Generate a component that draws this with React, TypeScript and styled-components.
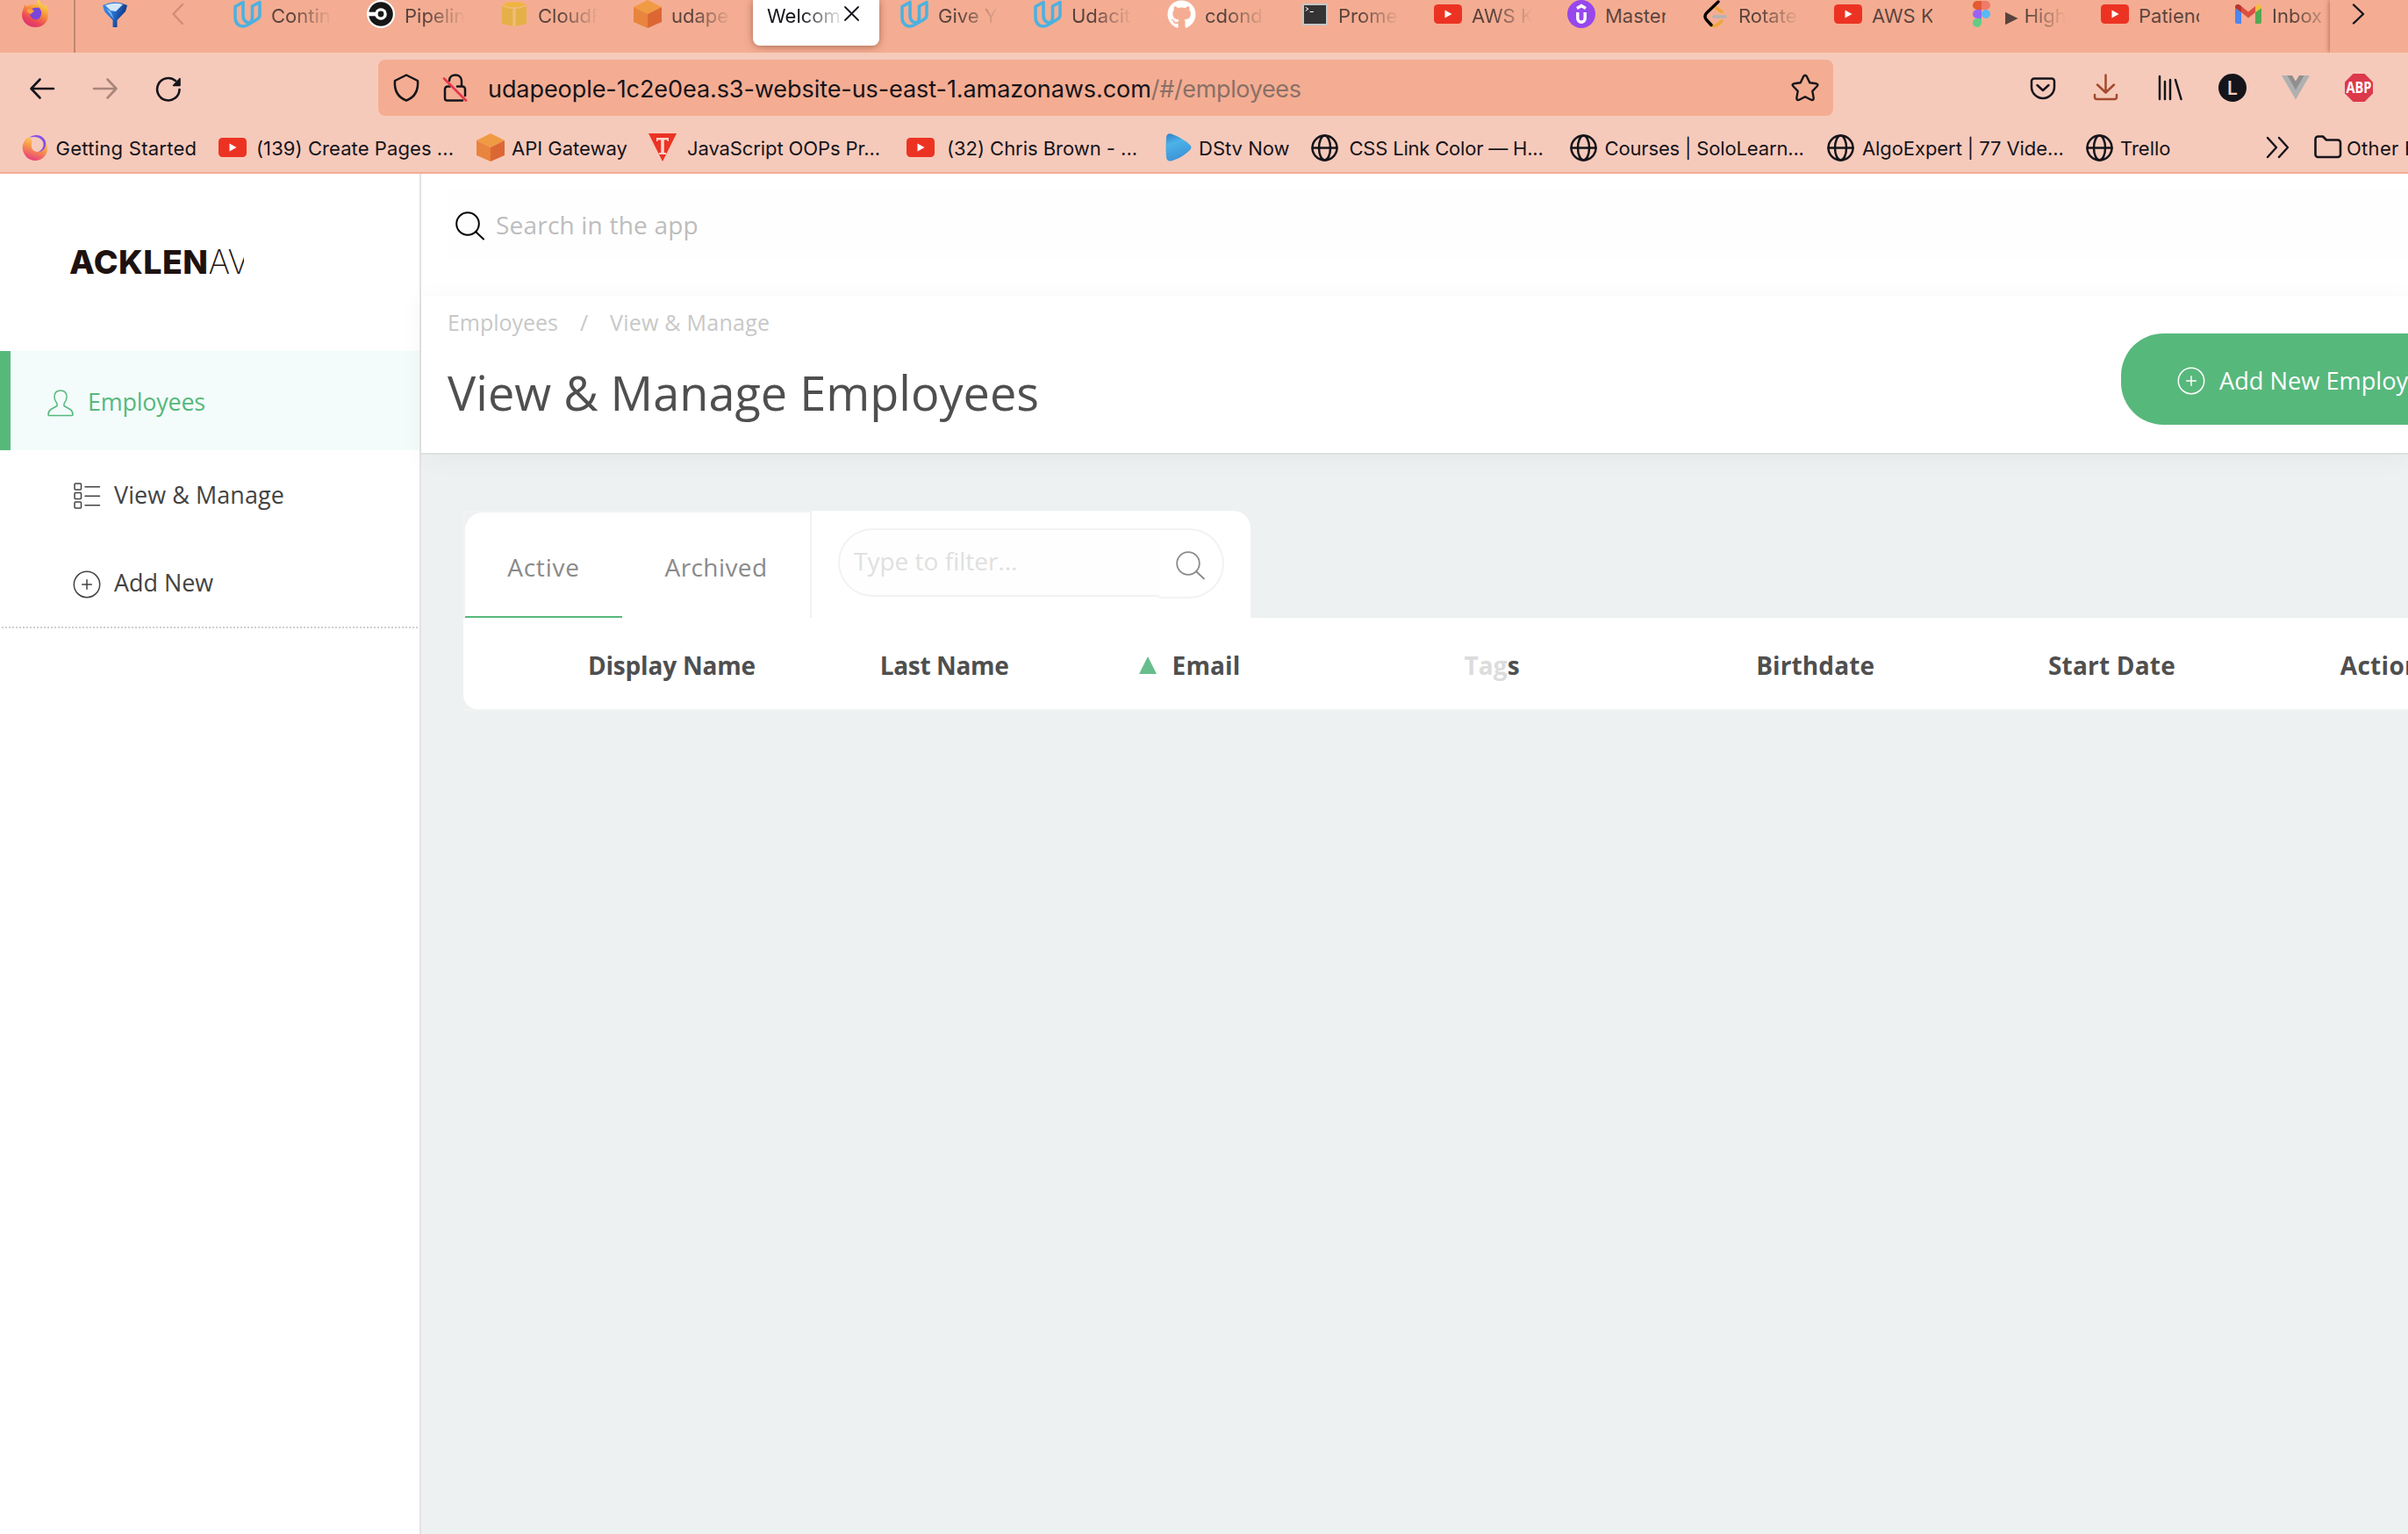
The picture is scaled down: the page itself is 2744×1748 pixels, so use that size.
import React from "react";
import styled, { createGlobalStyle, css } from "styled-components";
import { FaGithub } from "react-icons/fa";

const peach = "#f4ad92";
const blush = "#f6cabb";
const ink = "#15141a";
const green = "#57b87c";
const slate = "#4f4f4f";

const Global = createGlobalStyle`
  * { box-sizing: border-box; }
  html, body { margin: 0; overflow: hidden; background: #fff; }
  svg { display: block; flex: none; }
`;

const Window = styled.div`
  width: 2744px;
  height: 1748px;
  display: flex;
  flex-direction: column;
  overflow: hidden;
  font-family: "Open Sans", "Noto Sans", sans-serif;
`;

/* ---------- browser chrome ---------- */

const Chrome = styled.header`
  flex: none;
  height: 198px;
  border-bottom: 2px solid ${peach};
  background: ${blush};
  color: ${ink};
  font-family: Inter, "Liberation Sans", sans-serif;
`;

const TabStrip = styled.div`
  display: flex;
  height: 60px;
  background: ${peach};
`;

const Pinned = styled.div<{ $w: number; $pad: number; $line?: boolean }>`
  flex: none;
  width: ${(p) => p.$w}px;
  padding-left: ${(p) => p.$pad}px;
  ${(p) => p.$line && css`border-right: 2px solid #bf8773;`}
`;

const Tabs = styled.div`
  flex: 1;
  display: flex;
  overflow: hidden;
`;

const Tab = styled.div<{ $active?: boolean }>`
  flex: none;
  display: flex;
  width: 152px;
  height: 60px;
  padding-left: 20px;
  color: rgba(21, 20, 26, 0.7);
  ${(p) =>
    p.$active &&
    css`
      width: 144px;
      height: 52px;
      margin: 0 4px;
      padding-left: 16px;
      border-radius: 0 0 8px 8px;
      background: #fff;
      color: ${ink};
      box-shadow: 0 1px 8px rgba(90, 40, 20, 0.5);
    `}
`;

const Favicon = styled.div`
  display: flex;
  flex: none;
  align-items: center;
  justify-content: center;
  width: 32px;
  height: 32px;
`;

const TabLabel = styled.div<{ $w: number; $fade: boolean }>`
  width: ${(p) => p.$w}px;
  margin-left: 11px;
  height: 36px;
  line-height: 36px;
  font-size: 22px;
  white-space: nowrap;
  overflow: hidden;
  ${(p) => p.$fade && css`mask-image: linear-gradient(to right, #000 35%, transparent 100%);`}
`;

const ActiveLabel = styled(TabLabel)`
  margin-left: 0;
  mask-image: linear-gradient(to right, #000 45%, transparent 105%);
`;

const CloseBox = styled.div`
  width: 20px;
  margin: 6px 0 0 3px;
`;

const Play = styled.span`
  font-family: "DejaVu Sans", sans-serif;
  font-size: 19px;
  margin-right: 7px;
`;

const ScrollRight = styled.div`
  flex: none;
  width: 89px;
  padding: 4px 0 0 24px;
  box-shadow: -1px 0 5px rgba(120, 60, 40, 0.5);
  clip-path: inset(0 0 0 -8px);
`;

const NavRow = styled.div`
  display: flex;
  align-items: center;
  height: 80px;
  padding-left: 32px;
`;

const NavButtons = styled.div`
  display: flex;
  gap: 40px;
  width: 399px;
`;

const UrlBar = styled.div`
  display: flex;
  align-items: center;
  width: 1658px;
  height: 64px;
  padding: 0 16px;
  border-radius: 8px;
  background: ${peach};
`;

const UrlIcon = styled.div<{ $w: number }>`
  width: ${(p) => p.$w}px;
`;

const Url = styled.div`
  flex: 1;
  padding-top: 4px;
  font-size: 27px;
  line-height: 60px;
  letter-spacing: -0.07px;
  white-space: nowrap;
`;

const UrlPath = styled.span`
  color: #8a7068;
  letter-spacing: -0.35px;
`;

const Extensions = styled.div`
  display: flex;
  gap: 40px;
  margin-left: 223px;
`;

const Bookmarks = styled.div`
  display: flex;
  height: 56px;
  padding-left: 25px;
`;

const Bookmark = styled.div<{ $w: number; $ls: number }>`
  flex: none;
  display: flex;
  align-items: center;
  width: ${(p) => p.$w}px;
  font-size: 22px;
  line-height: 54px;
  letter-spacing: ${(p) => p.$ls}px;
  white-space: nowrap;
`;

const BookmarkIcon = styled.div<{ $w: number }>`
  flex: none;
  width: ${(p) => p.$w}px;
`;

const BookmarkText = styled.span`
  padding-top: 2px;
`;

/* ---------- application ---------- */

const AppShell = styled.div`
  flex: 1;
  display: flex;
  min-height: 0;
`;

const Sidebar = styled.nav`
  flex: none;
  width: 480px;
  border-right: 2px solid #e2e2e2;
  background: #fff;
`;

const LogoArea = styled.div`
  height: 202px;
  padding: 74px 0 0 79px;
`;

const Logo = styled.div`
  width: 199px;
  overflow: hidden;
  white-space: nowrap;
  font-family: Inter, sans-serif;
  font-size: 37.5px;
  line-height: 54px;
  font-weight: 800;
  letter-spacing: 0.5px;
  color: #1d1210;
`;

const LogoThin = styled.span`
  font-weight: 200;
  letter-spacing: 0;
`;

const SideItem = styled.div<{ $h: number; $pad: number; $active?: boolean }>`
  display: flex;
  align-items: center;
  height: ${(p) => p.$h}px;
  padding-left: ${(p) => p.$pad}px;
  font-size: 26.9px;
  line-height: 40px;
  color: #434343;
  ${(p) =>
    p.$active &&
    css`
      padding-top: 2px;
      border-left: 12px solid ${green};
      background: #f3fcfb;
      color: ${green};
    `}
`;

const SideIcon = styled.div<{ $w: number }>`
  width: ${(p) => p.$w}px;
  padding-top: 3px;
`;

const SideLabel = styled.span<{ $ls?: number }>`
  letter-spacing: ${(p) => p.$ls ?? 0}px;
`;

const SideRule = styled.div`
  margin: 0 2px;
  height: 2px;
  background: repeating-linear-gradient(to right, #d0d0d0 0 2px, transparent 2px 4px);
`;

const Main = styled.main`
  flex: 1;
  display: flex;
  flex-direction: column;
  min-width: 0;
`;

const SearchArea = styled.div`
  flex: none;
  height: 139px;
  padding: 19px 0 0 30px;
  background: #fff;
`;

const SearchField = styled.div`
  display: flex;
  align-items: center;
  gap: 12px;
  height: 78px;
  padding-left: 9px;
  background: #fefefe;
  font-size: 28px;
  letter-spacing: 0.2px;
  line-height: 44px;
  color: #bdbdbd;
`;

const SearchIcon = styled.div`
  padding-top: 3px;
`;

const PageHeader = styled.div`
  position: relative;
  flex: none;
  display: flex;
  justify-content: space-between;
  height: 181px;
  padding-left: 30px;
  border-bottom: 2px solid #dfe1e1;
  background: #fff;
  box-shadow: 0 4px 28px rgba(0, 0, 0, 0.045);
`;

const Crumbs = styled.div`
  display: flex;
  padding-top: 12px;
  font-size: 25px;
  line-height: 36px;
  color: #c8c8c8;
`;

const Crumb = styled.span<{ $w?: number; $ls: number }>`
  width: ${(p) => (p.$w ? `${p.$w}px` : "auto")};
  letter-spacing: ${(p) => p.$ls}px;
`;

const Title = styled.h1`
  margin: 26px 0 0;
  font-size: 54px;
  line-height: 72px;
  font-weight: 400;
  letter-spacing: 0.03px;
  color: ${slate};
`;

const AddButton = styled.div`
  flex: none;
  display: flex;
  align-items: center;
  width: 327px;
  height: 104px;
  margin-top: 43px;
  padding: 3px 0 0 64px;
  border-radius: 48px 0 0 48px;
  background: ${green};
  color: #fff;
  font-size: 27.2px;
  line-height: 44px;
  white-space: nowrap;
  overflow: hidden;
`;

const AddLabel = styled.span`
  margin-left: 16px;
`;

const Content = styled.section`
  flex: 1;
  padding: 64px 0 0 48px;
  background: #edf1f2;
`;

const Toolbar = styled.div`
  display: flex;
  height: 122px;
`;

const StatusTabs = styled.div`
  width: 395px;
  border: solid #f2f3f3;
  border-width: 2px 0 0 2px;
`;

const StatusTabsBody = styled.div`
  display: flex;
  height: 120px;
  border-radius: 20px 0 0 0;
  background: #fff;
`;

const StatusTab = styled.div<{ $w: number; $ls: number; $on?: boolean }>`
  width: ${(p) => p.$w}px;
  height: 120px;
  padding-top: 4px;
  border-bottom: 2px solid ${(p) => (p.$on ? green : "transparent")};
  text-align: center;
  font-size: 28px;
  line-height: 116px;
  letter-spacing: ${(p) => p.$ls}px;
  color: #8a8a8a;
`;

const FilterPanel = styled.div`
  display: flex;
  width: 502px;
  padding: 20px 0 0 30px;
  border-left: 2px solid #f1f2f2;
  border-radius: 0 20px 0 0;
  background: #fff;
`;

const FilterInput = styled.div`
  width: 366px;
  height: 78px;
  padding-left: 16px;
  border: solid #f2f2f2;
  border-width: 2px 0 2px 2px;
  border-radius: 40px 0 0 40px;
  background: #fefefe;
  font-size: 28px;
  line-height: 71px;
  color: #e0e0e0;
`;

const FilterButton = styled.div`
  width: 74px;
  height: 80px;
  padding: 24px 0 0 19px;
  border: solid #f2f2f2;
  border-width: 2px 2px 2px 0;
  border-radius: 0 40px 40px 0;
`;

const TableHead = styled.div`
  border-bottom: 2px solid #f2f3f3;
`;

const TableRow = styled.div`
  display: flex;
  height: 104px;
  padding: 4px 0 0 142px;
  border-radius: 0 0 0 16px;
  background: #fff;
  overflow: hidden;
`;

const HeadCell = styled.div<{ $ls: number }>`
  flex: none;
  display: flex;
  align-items: center;
  justify-content: space-between;
  width: 332.8px;
  padding-right: 18px;
  font-size: 28px;
  font-weight: 700;
  letter-spacing: ${(p) => p.$ls}px;
  color: ${slate};
  white-space: nowrap;
`;

const Faded = styled.span`
  color: #dcdcdc;
`;

const SortMark = styled.div`
  width: 0;
  height: 0;
  margin-top: -1px;
  border: solid transparent;
  border-width: 0 10px 20px;
  border-bottom-color: #67be8c;
`;

/* ---------- icons ---------- */

type SvgProps = { w: number; h: number; children: React.ReactNode; sw?: number; color?: string; fill?: boolean };
const Glyph = ({ w, h, children, sw = 2.4, color = ink, fill }: SvgProps) => (
  <svg
    width={w}
    height={h}
    viewBox={`0 0 ${w} ${h}`}
    fill={fill ? color : "none"}
    stroke={fill ? "none" : color}
    strokeWidth={sw}
    strokeLinecap="round"
    strokeLinejoin="round"
  >
    {children}
  </svg>
);

const Udacity = () => (
  <Glyph w={32} h={32} color="#4db1df" sw={3.6}>
    <path d="M11 2.5 L2 7.5 V20 C2 26 6 30 11 30 C13 30 14.5 29.3 16 28.5 L27 22 C29 20.8 30 19 30 17 V2.5 L21.5 7 V20 C21.5 22.5 20.5 24.5 18.5 26.3 M11 2.5 V18 C11 22.5 13.5 25.3 18 26" />
  </Glyph>
);
const Circle = () => (
  <Glyph w={32} h={32} fill>
    <circle cx="16" cy="16" r="16" fill="#fff" />
    <circle cx="16" cy="16" r="13.8" fill="#161616" />
    <circle cx="16" cy="16" r="6.8" fill="#fff" />
    <rect x="1.5" y="13.7" width="9" height="4.6" fill="#fff" />
    <circle cx="16" cy="16" r="3.4" fill="#161616" />
  </Glyph>
);
const YellowBox = () => (
  <Glyph w={28} h={28} fill>
    <path d="M0 5 L12.5 8 V28 L0 25Z M28 5 L15.5 8 V28 L28 25Z" fill="#e5b048" />
    <path d="M12.5 8h3v20h-3z" fill="#eebf74" />
    <path d="M0 3.5 L7 .6 H21 L28 3.5 L20 6.6 H8Z" fill="#f0b540" />
    <path d="M1 4.5 L8 7 H20 L27 4.5" fill="none" stroke="#efc27e" strokeWidth="1" />
  </Glyph>
);
const Cube = () => (
  <Glyph w={32} h={32} fill>
    <path d="M16 0 L32 8 L16 16 L0 8Z" fill="#f09b43" />
    <path d="M0 8 L16 16 V32 L0 25Z" fill="#e8843d" />
    <path d="M32 8 L16 16 V32 L32 25Z" fill="#dc6734" />
  </Glyph>
);
const Terminal = () => (
  <Glyph w={29} h={25} fill>
    <path d="M0 0h29v25H0z" fill="#c5c6c6" />
    <path d="M2 2h25v21H2z" fill="#343434" />
    <path d="M4 4.5l3 1.800-3 1.800M9 9.500h3.500" stroke="#fff" strokeWidth="1" fill="none" />
  </Glyph>
);
const YouTube = () => (
  <Glyph w={32} h={22} fill>
    <rect width="32" height="22" rx="4.5" fill="#ec3323" />
    <path d="M12.500 6.500 L20.500 11 L12.500 15.500Z" fill="#fff" />
  </Glyph>
);
const Udemy = () => (
  <Glyph w={32} h={32} color="#fff" sw={3.4}>
    <circle cx="16" cy="16" r="16" fill="#9747eb" stroke="none" />
    <path d="M11 9.500 L16 6.500 L21 9.500" strokeLinecap="butt" strokeLinejoin="miter" />
    <path d="M11.800 14 V21 a4.200 4.200 0 0 0 8.400 0 V14" strokeLinecap="butt" />
  </Glyph>
);
const Leet = () => (
  <Glyph w={32} h={32} sw={3.4}>
    <path d="M17 8.500 L24 13.500 M12 28.500 C15 30.500 19 29.500 24 24" stroke="#efa53a" />
    <path d="M15 19 H28" stroke="#b3b3b3" />
    <path d="M20 2 L7 14.500 C4.500 17 4.500 20 6.500 22.500 L12 28.500" stroke="#000" />
  </Glyph>
);
const Figma = () => (
  <Glyph w={20} h={30} fill>
    <path d="M5 0 H10 V10 H5 A5 5 0 0 1 5 0Z" fill="#e35b30" />
    <path d="M10 0 H15 A5 5 0 0 1 15 10 H10Z" fill="#ef7a6a" />
    <path d="M5 10 H10 V20 H5 A5 5 0 0 1 5 10Z" fill="#9b63f3" />
    <circle cx="15" cy="15" r="5" fill="#56b9f8" />
    <path d="M5 20 H10 V25 A5 5 0 1 1 5 20Z" fill="#62cc86" />
  </Glyph>
);
const Gmail = () => (
  <Glyph w={30} h={22} fill>
    <path d="M0 4 L7 9 V22 H2 A2 2 0 0 1 0 20Z" fill="#4b86ee" />
    <path d="M30 4 L23 9 V22 H28 A2 2 0 0 0 30 20Z" fill="#54a853" />
    <path d="M7 2 L15 8.500 L23 2 V9 L15 15.500 L7 9Z" fill="#dc4f40" />
    <path d="M0 3 C0 0 3.500-1 6 1 L7 2 V9 L0 4Z" fill="#b9342b" />
    <path d="M30 3 C30 0 26.500-1 24 1 L23 2 V9 L30 4Z" fill="#f2bd42" />
  </Glyph>
);
const FirefoxLogo = () => (
  <svg width="32" height="32" viewBox="0 0 32 32">
    <defs>
      <linearGradient id="ff" x1="0.8" y1="0" x2="0.3" y2="1">
        <stop offset="0" stopColor="#fdea4a" />
        <stop offset="0.4" stopColor="#f79a3a" />
        <stop offset="0.75" stopColor="#ee4a55" />
        <stop offset="1" stopColor="#dc2f7c" />
      </linearGradient>
    </defs>
    <path d="M2 12 C3 8 4 6 5 5 C5.500 6.500 6 7 7 7.500 C8.500 6 10 5.500 11 5.500 C13 5 17 5 18 6 C17 3 19 0 20 -1 C21 3 25 5 26 8 C27 6.500 27.500 6 28 5 C30 8 31 12 31 16 C31 25 25 31 16.500 31 C8 31 1 25 1 17 C1 15 1.500 13 2 12Z" fill="url(#ff)" />
    <path d="M10 15 C11 10 15 8 18 9 C20 7.500 22 10 22 11 C24 13 23.500 19 20 21.500 C15 24 10 20 10 15Z" fill="#7a46d8" />
    <path d="M6 12 C9 9.500 12 10.500 15 12 C14 14 12.500 14.500 11 16 C9 15 7 14 6 12Z" fill="#f9a23b" />
  </svg>
);
const FirefoxSwirl = () => (
  <svg width="30" height="30" viewBox="0 0 30 30">
    <defs>
      <linearGradient id="sw" x1="0.7" y1="0" x2="0.3" y2="1">
        <stop offset="0" stopColor="#fbdc6a" />
        <stop offset="0.45" stopColor="#f7974a" />
        <stop offset="1" stopColor="#e63a80" />
      </linearGradient>
    </defs>
    <path d="M4 6 C1 10 0 14 1 18 C2.500 25 8 30 15 30 C23 30 29 24 29 16 C29 13 28 10 26 8 C27 14 24 19.500 18 20 C13 20 10 16 11 11 C12 8 11 5 9 4 C7 3.500 5 4.500 4 6Z" fill="url(#sw)" />
    <path d="M8 4 C14 -1 23 0 26.500 7 C29 14 25 20 18 20.500 C24.500 17.500 26 11 23 7 C20 3 14 2 8 4Z" fill="#8650e8" />
  </svg>
);
const BlueGem = () => (
  <svg width="34" height="32" viewBox="0 0 34 32">
    <defs>
      <linearGradient id="gem" x1="0" y1="0" x2="1" y2="0.4">
        <stop offset="0" stopColor="#3f8ce4" />
        <stop offset="0.5" stopColor="#2a74d2" />
        <stop offset="1" stopColor="#0c2f7d" />
      </linearGradient>
    </defs>
    <path d="M3 6 Q17 -1 31 6 L29 13 L19.500 23 V31 H14.500 V23 L5 13Z" fill="url(#gem)" />
    <path d="M6 6 Q17 2 26 5 L18 13 L12 12Z" fill="#d4e7fb" />
    <path d="M7 10 L12 13 L16 22Z" fill="#8abcf2" />
  </svg>
);
const Globe = () => (
  <Glyph w={31} h={31} sw={2.500}>
    <circle cx="15.500" cy="15.500" r="14" />
    <ellipse cx="15.500" cy="15.500" rx="6.500" ry="14" />
    <path d="M1.500 15.500 H29.500" />
  </Glyph>
);
const PointT = () => (
  <Glyph w={32} h={32} fill>
    <path d="M0 0 H32 L16 32Z" fill="#ec3323" />
    <path d="M9 5 H23 V9 H21.500 V7.500 H17.800 V22 H20 V24 H12 V22 H14.200 V7.500 H10.500 V9 H9Z" fill="#f8d5cc" />
  </Glyph>
);
const Dstv = () => (
  <svg width="30" height="32" viewBox="0 0 30 32">
    <defs>
      <linearGradient id="ds" x1="0" y1="0" x2="0.3" y2="1">
        <stop offset="0" stopColor="#2f7fc4" />
        <stop offset="0.4" stopColor="#4db2e8" />
        <stop offset="1" stopColor="#3c93d6" />
      </linearGradient>
    </defs>
    <path d="M1 5 C1 1 4 -1 8 1 C16 4 24 9 28 13 C30 15 30 17 28 19 C23 24 15 29 8 31 C4 32.500 1.500 31 1 27 C.4 20 .4 12 1 5Z" fill="url(#ds)" />
  </svg>
);

const tabs: { label: React.ReactNode; icon?: React.ReactNode; fade?: boolean; active?: boolean }[] = [
  { label: "Contin", icon: <Udacity /> },
  { label: "Pipelin", icon: <Circle /> },
  { label: "CloudF", icon: <YellowBox /> },
  { label: "udape", icon: <Cube /> },
  { label: "Welcom", active: true },
  { label: "Give Y", icon: <Udacity /> },
  { label: "Udacit", icon: <Udacity /> },
  { label: "cdond", icon: <FaGithub size={33} color="#fff" /> },
  { label: "Prome", icon: <Terminal /> },
  { label: "AWS K", icon: <YouTube /> },
  { label: "Master", icon: <Udemy />, fade: false },
  { label: "Rotate", icon: <Leet /> },
  { label: "AWS K", icon: <YouTube />, fade: false },
  { label: <><Play>▶</Play>High</>, icon: <Figma /> },
  { label: "Patienc", icon: <YouTube />, fade: false },
  { label: "Inbox", icon: <Gmail /> },
];

const bookmarks = [
  { w: 224, off: 38.5, ls: 0.27, text: "Getting Started", icon: <FirefoxSwirl /> },
  { w: 294, off: 43, ls: 0.08, text: "(139) Create Pages ...", icon: <YouTube /> },
  { w: 196, off: 40, ls: 0, text: "API Gateway", icon: <Cube /> },
  { w: 294, off: 44, ls: -0.1, text: "JavaScript OOPs Pr...", icon: <PointT /> },
  { w: 295, off: 46, ls: -0.03, text: "(32) Chris Brown - ...", icon: <YouTube /> },
  { w: 166, off: 38, ls: 0, text: "DStv Now", icon: <Dstv /> },
  { w: 295, off: 43.5, ls: -0.2, text: "CSS Link Color — H...", icon: <Globe /> },
  { w: 293, off: 39.5, ls: -0.15, text: "Courses | SoloLearn...", icon: <Globe /> },
  { w: 295, off: 40, ls: -0.08, text: "AlgoExpert | 77 Vide...", icon: <Globe /> },
  { w: 205, off: 39, ls: 0, text: "Trello", icon: <Globe /> },
  {
    w: 55, off: 30, ls: 0, text: "",
    icon: <Glyph w={28} h={26} sw={2.400}><path d="M2 2 L12 13 L2 24 M15 2 L25 13 L15 24" /></Glyph>,
  },
  {
    w: 120, off: 37, ls: 0.3, text: "Other Bookmarks",
    icon: <Glyph w={32} h={28} sw={2.600}><path d="M1.500 4.500 A3 3 0 0 1 4.500 1.500 H10 L14 5.500 H27 A3 3 0 0 1 30 8.500 V22 A3 3 0 0 1 27 25 H4.500 A3 3 0 0 1 1.500 22Z" /></Glyph>,
  },
];

const Plus = ({ color }: { color: string }) => (
  <Glyph w={32} h={32} sw={1.5} color={color}>
    <circle cx="16" cy="16" r="14.700" />
    <path d="M16 10.700 V21.300 M10.700 16 H21.300" />
  </Glyph>
);
const Magnifier = ({ color, sw }: { color: string; sw: number }) => (
  <Glyph w={34} h={34} sw={sw} color={color}>
    <circle cx="14" cy="14" r="12.800" />
    <path d="M23 23 L32 31.500" />
  </Glyph>
);

export default function App() {
  return (
    <Window>
      <Global />
      <Chrome>
        <TabStrip>
          <Pinned $w={86} $pad={24} $line><FirefoxLogo /></Pinned>
          <Pinned $w={90} $pad={28}><BlueGem /></Pinned>
          <Pinned $w={70} $pad={18}>
            <Glyph w={18} h={32} color="#d08e76"><path d="M14 5 L3.500 16 L14 27" /></Glyph>
          </Pinned>
          <Tabs>
            {tabs.map((t, i) =>
              t.active ? (
                <Tab key={i} $active>
                  <ActiveLabel $w={84} $fade={false}>{t.label}</ActiveLabel>
                  <CloseBox>
                    <Glyph w={20} h={20} sw={1.8}><path d="M2 2 L17 17 M17 2 L2 17" /></Glyph>
                  </CloseBox>
                </Tab>
              ) : (
                <Tab key={i}>
                  <Favicon>{t.icon}</Favicon>
                  <TabLabel $w={69} $fade={t.fade !== false}>{t.label}</TabLabel>
                </Tab>
              )
            )}
          </Tabs>
          <ScrollRight>
            <Glyph w={18} h={24} sw={2.4}><path d="M3 1.500 L14 12 L3 22.500" /></Glyph>
          </ScrollRight>
        </TabStrip>
        <NavRow>
          <NavButtons>
            <Glyph w={32} h={32} sw={2.6}><path d="M29 17 H4 M13.500 6.500 L3.500 17 L13.500 27.500" /></Glyph>
            <Glyph w={32} h={32} sw={2.6} color="#a8857a"><path d="M3 17 H28 M18.500 6.500 L28.500 17 L18.500 27.500" /></Glyph>
            <Glyph w={32} h={32} sw={2.6}>
              <path d="M28.500 18 A12.700 12.700 0 1 1 24 8" />
              <path d="M29 5.500 V13.500 H21.500Z" fill={ink} strokeWidth={1.500} />
            </Glyph>
          </NavButtons>
          <UrlBar>
            <UrlIcon $w={54}>
              <Glyph w={32} h={32} sw={2.5}><path d="M16 1.500 L29 8 C30 20 25 27 16 30.500 C7 27 2 20 3 8Z" /></Glyph>
            </UrlIcon>
            <UrlIcon $w={55}>
              <Glyph w={32} h={32} sw={2.5}>
                <path d="M11 8 C11 4 14 1.500 18 1.500 C22 1.500 25 4 25 8.500 V14.500 H20 M12 14.500 H9 A3 3 0 0 0 6 17.500 V28 A2.500 2.500 0 0 0 8.500 30.500 H26 M29 25 V17.500 A3 3 0 0 0 26 14.500" />
                <path d="M5 5.500 L30 30.500" stroke="#e8374e" strokeWidth={2.800} />
              </Glyph>
            </UrlIcon>
            <Url>
              udapeople-1c2e0ea.s3-website-us-east-1.amazonaws.com<UrlPath>/#/employees</UrlPath>
            </Url>
            <Glyph w={32} h={32} sw={2.4}>
              <path d="M14.200 3 Q16 .5 17.800 3 L21.300 10.300 L28.800 11.300 Q31.500 12 29.600 14.300 L24.300 19.900 L25.700 27.600 Q25.700 31 22.800 29.700 L16 26.200 L9.200 29.700 Q6.300 31 6.300 27.600 L7.700 19.900 L2.400 14.300 Q.5 12 3.200 11.300 L10.700 10.300Z" />
            </Glyph>
          </UrlBar>
          <Extensions>
            <Glyph w={32} h={32} sw={2.500}>
              <path d="M6 5.500 H26 A3 3 0 0 1 29 8.500 V15 A13 13 0 0 1 3 15 V8.500 A3 3 0 0 1 6 5.500Z M9.500 13 L16 19 L22.500 13" />
            </Glyph>
            <Glyph w={32} h={32} sw={2.500} color="#a34a2c">
              <path d="M15.500 1.500 V20 M6 12.500 L15.500 21.500 L25 12.500 M3 24 V26.500 A2.500 2.500 0 0 0 5.500 29 H25.500 A2.500 2.500 0 0 0 28 26.500 V24" />
            </Glyph>
            <Glyph w={32} h={32} sw={2.500}><path d="M5 3 V29 M11 9 V29 M17 7 V29 M23 7 L29.500 29" /></Glyph>
            <Glyph w={32} h={32} fill>
              <circle cx="16" cy="16" r="16" />
              <text x="16" y="23.500" textAnchor="middle" fontFamily="Inter" fontWeight="600" fontSize="21" fill={blush}>L</text>
            </Glyph>
            <Glyph w={32} h={32} fill>
              <path d="M0 2 H32 L16 29.500Z" fill="#b0b0b0" />
              <path d="M6.500 2 H25.500 L16 18.500Z" fill="#8f8f8f" />
              <path d="M12 2 H20 L16 8.500Z" fill={blush} />
            </Glyph>
            <Glyph w={32} h={32} fill>
              <path d="M9.500 0 H22.500 L32 9.500 V22.500 L22.500 32 H9.500 L0 22.500 V9.500Z" fill="#dc394b" />
              <text x="16" y="22" textAnchor="middle" textLength="29" lengthAdjust="spacingAndGlyphs" fontFamily="Open Sans" fontWeight="700" fontSize="17" fill="#fff">ABP</text>
            </Glyph>
          </Extensions>
        </NavRow>
        <Bookmarks>
          {bookmarks.map((b, i) => (
            <Bookmark key={i} $w={b.w} $ls={b.ls}>
              <BookmarkIcon $w={b.off}>{b.icon}</BookmarkIcon>
              <BookmarkText>{b.text}</BookmarkText>
            </Bookmark>
          ))}
        </Bookmarks>
      </Chrome>

      <AppShell>
        <Sidebar>
          <LogoArea>
            <Logo>ACKLEN<LogoThin>AV</LogoThin></Logo>
          </LogoArea>
          <SideItem $h={113} $pad={42} $active>
            <SideIcon $w={46}>
              <Glyph w={30} h={31} sw={1.500} color={green}>
                <path d="M15 1 C10.500 1 8 4 8 8.500 C8 12 9.500 14 11 16 V18.500 L4 22.500 C1.500 24 1 26 1 28.500 Q1 29.600 2 29.600 H28 Q29 29.600 29 28.500 C29 26 28.500 24 26 22.500 L19 18.500 V16 C20.500 14 22 12 22 8.500 C22 4 19.500 1 15 1Z" />
              </Glyph>
            </SideIcon>
            <SideLabel $ls={-0.2}>Employees</SideLabel>
          </SideItem>
          <SideItem $h={101} $pad={84}>
            <SideIcon $w={46}>
              <Glyph w={31} h={31} sw={1.500} color="#434343">
                <rect x="1" y="1" width="7.500" height="7" rx="1" />
                <rect x="1" y="11.500" width="7.500" height="7" rx="1" />
                <rect x="1" y="22" width="7.500" height="7" rx="1" />
                <path d="M13 4.700 H29.500 M13 15.200 H29.500 M13 25.700 H29.500" />
              </Glyph>
            </SideIcon>
            <SideLabel $ls={0.1}>View &amp; Manage</SideLabel>
          </SideItem>
          <SideItem $h={100} $pad={83}>
            <SideIcon $w={47}><Plus color="#434343" /></SideIcon>
            <SideLabel>Add New</SideLabel>
          </SideItem>
          <SideRule />
        </Sidebar>

        <Main>
          <SearchArea>
            <SearchField>
              <SearchIcon><Magnifier color="#000" sw={2} /></SearchIcon>
              Search in the app
            </SearchField>
          </SearchArea>
          <PageHeader>
            <div>
              <Crumbs>
                <Crumb $w={151} $ls={-0.05}>Employees</Crumb>
                <Crumb $w={34} $ls={0}>/</Crumb>
                <Crumb $ls={0.25}>View &amp; Manage</Crumb>
              </Crumbs>
              <Title>View &amp; Manage Employees</Title>
            </div>
            <AddButton>
              <Plus color="#fff" />
              <AddLabel>Add New Employee</AddLabel>
            </AddButton>
          </PageHeader>
          <Content>
            <Toolbar>
              <StatusTabs>
                <StatusTabsBody>
                  <StatusTab $w={179} $ls={0.8} $on>Active</StatusTab>
                  <StatusTab $w={214} $ls={0.4}>Archived</StatusTab>
                </StatusTabsBody>
              </StatusTabs>
              <FilterPanel>
                <FilterInput>Type to filter...</FilterInput>
                <FilterButton><Magnifier color="#8a8a8a" sw={1.800} /></FilterButton>
              </FilterPanel>
            </Toolbar>
            <TableHead>
              <TableRow>
                <HeadCell $ls={-0.2}>Display Name</HeadCell>
                <HeadCell $ls={-0.35}>Last Name<SortMark /></HeadCell>
                <HeadCell $ls={0.1}>Email</HeadCell>
                <HeadCell $ls={0.1}><span><Faded>Tag</Faded>s</span></HeadCell>
                <HeadCell $ls={0.1}>Birthdate</HeadCell>
                <HeadCell $ls={0.2}>Start Date</HeadCell>
                <HeadCell $ls={0.3}>Actions</HeadCell>
              </TableRow>
            </TableHead>
          </Content>
        </Main>
      </AppShell>
    </Window>
  );
}
